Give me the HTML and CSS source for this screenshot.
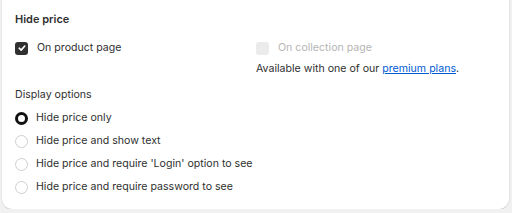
FILE: index.html
```html
<!DOCTYPE html>
<html lang="en">
<head>
    <meta charset="UTF-8">
    <title>Hide price</title>
    <link rel="stylesheet" href="styles.css">
</head>
<body>
    <div class="card">
        <div class="card-title">Hide price</div>

        <div class="pages">
            <label class="check">
                <span class="box checked">
                    <svg viewBox="0 0 12 12" width="12" height="12"><path d="M3.2 6.2 L5.2 8.1 L8.8 4" fill="none" stroke="#fff" stroke-width="1.6" stroke-linecap="round" stroke-linejoin="round"/></svg>
                </span>
                On product page
            </label>
            <div class="collection">
                <label class="check disabled">
                    <span class="box"></span>
                    On collection page
                </label>
                <div class="hint">Available with one of our <a href="#">premium plans</a>.</div>
            </div>
        </div>

        <div class="section-label">Display options</div>
        <div class="radios">
            <label class="radio"><span class="dot selected"></span>Hide price only</label>
            <label class="radio"><span class="dot"></span>Hide price and show text</label>
            <label class="radio"><span class="dot"></span>Hide price and require 'Login' option to see</label>
            <label class="radio"><span class="dot"></span>Hide price and require password to see</label>
        </div>
    </div>
</body>
</html>
```

FILE: styles.css
```css
body {
    margin: 0;
    background: #f1f1f1;
    font-family: 'Inter', 'Liberation Sans', sans-serif;
    font-size: 10.6px;
    color: #303030;
}

.card {
    box-sizing: border-box;
    width: 507px;
    height: 209px;
    margin: 0 0 0 2px;
    background: #fff;
    border-radius: 0 0 10px 10px;
    box-shadow: 0 1px 0 #d4d4d4, 1px 0 0 #e3e3e3, -1px 0 0 #e8e8e8;
    padding: 12px 13px;
}

.card-title {
    font-weight: 600;
    font-size: 11px;
    color: #303030;
    line-height: 14px;
}

.pages {
    display: flex;
    margin-top: 15px;
}

.check {
    display: flex;
    align-items: center;
    gap: 9px;
    line-height: 14px;
}

.pages > .check {
    width: 241px;
    align-self: flex-start;
}

.box {
    width: 13px;
    height: 13px;
    border-radius: 3px;
    box-sizing: border-box;
    display: flex;
    align-items: center;
    justify-content: center;
    background: #ebebeb;
}

.box.checked {
    background: #303030;
}

.check.disabled {
    color: #b5b5b5;
}

.hint {
    margin-top: 7px;
    line-height: 14px;
}

.hint a {
    color: #005bd3;
}

.section-label {
    margin-top: 12px;
    line-height: 14px;
}

.radios {
    display: flex;
    flex-direction: column;
    gap: 9px;
    margin-top: 9px;
}

.radio {
    display: flex;
    align-items: center;
    gap: 8px;
    line-height: 14px;
}

.dot {
    width: 13px;
    height: 13px;
    box-sizing: border-box;
    border-radius: 50%;
    border: 1px solid #cfcfcf;
}

.dot.selected {
    border: 3.5px solid #111;
}
```
